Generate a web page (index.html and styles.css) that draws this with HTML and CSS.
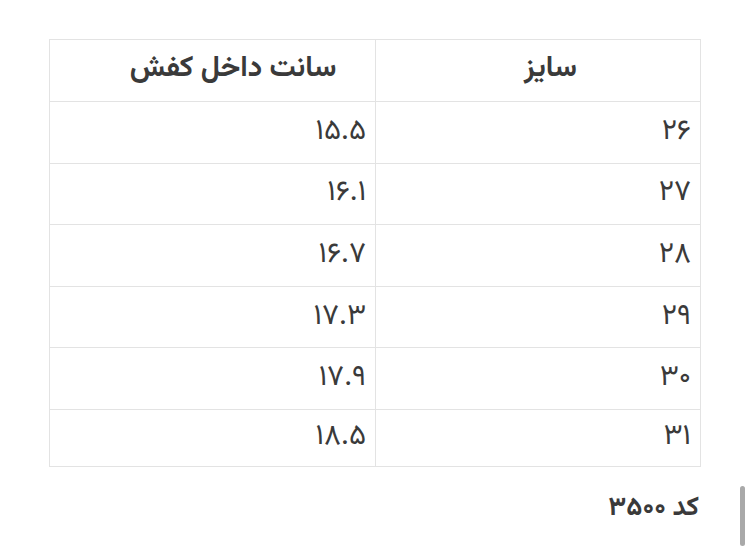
FILE: index.html
```html
<!DOCTYPE html>
<html lang="fa" dir="rtl">
<head>
<meta charset="utf-8">
<link rel="stylesheet" href="styles.css">
</head>
<body>
<div class="page">
  <table class="size-table">
    <thead>
      <tr><th class="col-size">سایز</th><th class="col-cm">سانت داخل کفش</th></tr>
    </thead>
    <tbody>
      <tr><td>۲۶</td><td>۱۵.۵</td></tr>
      <tr><td>۲۷</td><td>۱۶.۱</td></tr>
      <tr><td>۲۸</td><td>۱۶.۷</td></tr>
      <tr><td>۲۹</td><td>۱۷.۳</td></tr>
      <tr><td>۳۰</td><td>۱۷.۹</td></tr>
      <tr class="last"><td>۳۱</td><td>۱۸.۵</td></tr>
    </tbody>
  </table>
  <p class="code">کد ۳۵۰۰</p>
</div>
<div class="scrollbar"></div>
</body>
</html>
```
FILE: styles.css
```css
html, body {
  margin: 0;
  padding: 0;
  background: #ffffff;
}
body {
  font-family: "Vazirmatn", "Noto Sans Arabic", "DejaVu Sans", sans-serif;
  color: #3a3a3a;
  width: 750px;
  height: 557px;
  overflow: hidden;
  position: relative;
}
.page {
  padding: 39px 49px 0 49px;
}
.size-table {
  width: 652px;
  border-collapse: collapse;
  table-layout: fixed;
}
.size-table th,
.size-table td {
  border: 1px solid #e3e3e3;
  padding: 0 9px;
  box-sizing: border-box;
  line-height: 1;
  vertical-align: middle;
}
.size-table th {
  font-size: 29px;
  font-weight: bold;
  text-align: center;
  height: 62px;
  padding-left: 34px;
  padding-bottom: 3px;
}
.size-table th.col-cm { padding-left: 50px; }
.size-table td {
  font-size: 29px;
  text-align: right;
  font-weight: normal;
  height: 61.6px;
}
.size-table th.col-size { width: 325px; }
.size-table tr.last td { height: 57px; }
.code {
  margin: 26px 2px 0 0;
  font-size: 26.5px;
  font-weight: bold;
  line-height: 1.2;
}
.scrollbar {
  position: absolute;
  left: 740px;
  top: 486px;
  width: 5px;
  height: 60px;
  border-radius: 3px;
  background: #a9a9a9;
}
```
